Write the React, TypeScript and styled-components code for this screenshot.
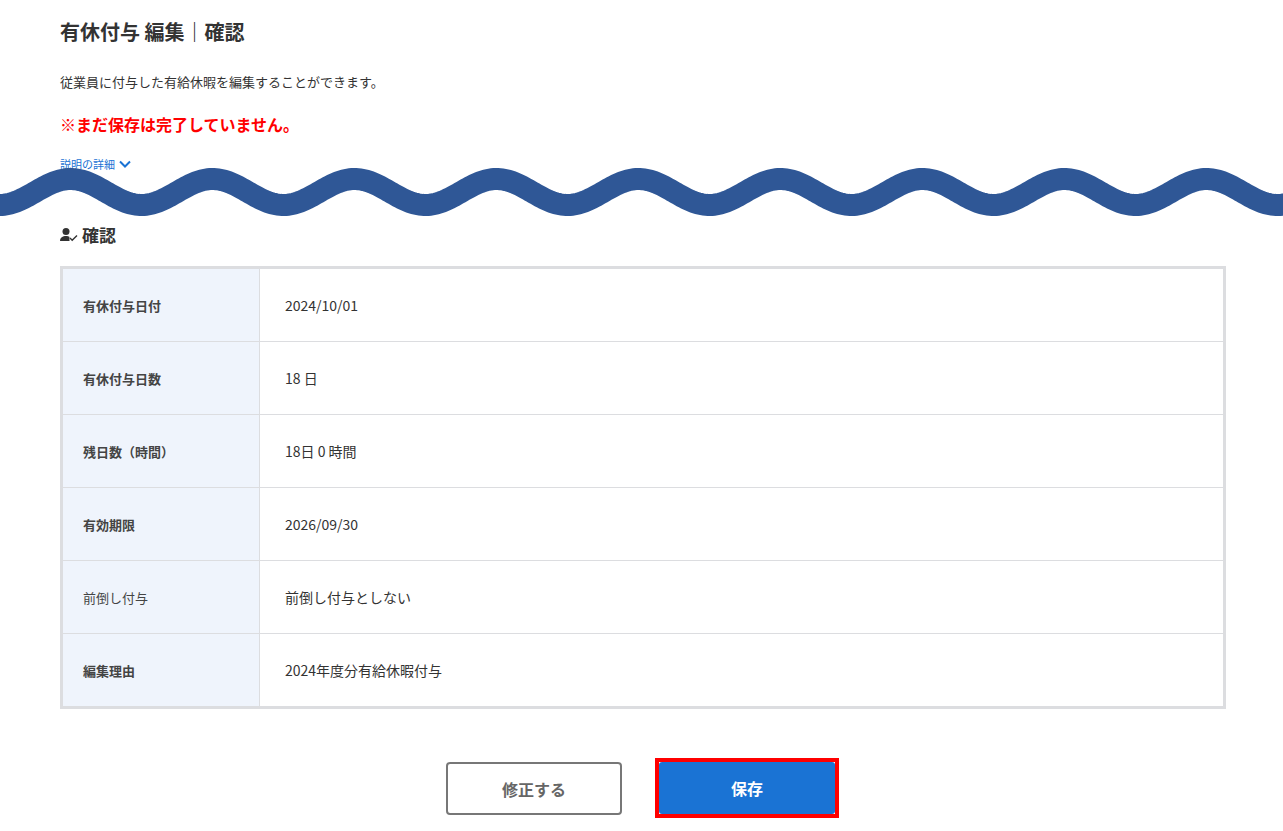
import React from "react";
import styled, { createGlobalStyle } from "styled-components";

const Global = createGlobalStyle`
  body { margin: 0; font-family: "Noto Sans CJK JP", "Noto Sans", sans-serif; color: #333; background: #fff; }
`;
const Page = styled.div`position: relative; padding: 14px 58px 0 60px; width: 1283px; box-sizing: border-box;`;
const Title = styled.h1`margin: 0; font-size: 20px; font-weight: 700; line-height: 36px;`;
const Desc = styled.p`margin: 22px 0 0; font-size: 13px; line-height: 20px;`;
const Warn = styled.p`margin: 20px 0 0; font-size: 16px; font-weight: 700; color: #ff0000; line-height: 24px;`;
const Link = styled.div`margin-top: 20px; font-size: 11px; color: #1a73d4; display: flex; align-items: center; gap: 4px; height: 16px;`;
const Section = styled.h2`margin: 50px 0 0; font-size: 17px; font-weight: 700; display: flex; align-items: center; gap: 4px; line-height: 26px;`;
const Table = styled.div`margin-top: 18px; border: 3px solid #dcdde0; width: 1166px; box-sizing: border-box;`;
const Row = styled.div`display: grid; grid-template-columns: 197px 1fr; height: 72px; & + & { border-top: 1px solid #dcdde0; }`;
const Label = styled.div`background: #eff4fc; border-right: 1px solid #dcdde0; display: flex; align-items: center; padding-left: 20px; font-size: 13px; font-weight: 700; color: #444;`;
const Value = styled.div`display: flex; align-items: center; padding-left: 25px; font-size: 14px;`;
const Buttons = styled.div`display: flex; justify-content: center; gap: 33px; margin-top: 49px; padding-right: 0;`;
const Outline = styled.button`width: 176px; height: 53px; border: 2px solid #777; border-radius: 4px; background: #fff; color: #666; font: 700 16px "Noto Sans CJK JP", sans-serif; margin-top: 4px;`;
const Frame = styled.div`border: 4px solid #ff0000; padding: 0;`;
const Primary = styled.button`width: 176px; height: 52px; border: none; border-radius: 3px; background: #1a73d4; color: #fff; font: 700 16px "Noto Sans CJK JP", sans-serif; display: block;`;
const Wave = styled.svg`position: absolute; left: 0; top: 150px; pointer-events: none;`;

const rows: [string, string, boolean][] = [
  ["有休付与日付", "2024/10/01", true],
  ["有休付与日数", "18 日", true],
  ["残日数（時間）", "18日 0 時間", true],
  ["有効期限", "2026/09/30", true],
  ["前倒し付与", "前倒し付与としない", false],
  ["編集理由", "2024年度分有給休暇付与", true],
];

function wavePath() {
  const P = 142, A = 13, c = 42;
  let d = `M -30 ${c + A * Math.sin((-30 / P) * 2 * Math.PI - 1.2)}`;
  for (let x = -28; x <= 1300; x += 2) {
    d += ` L ${x} ${(c - A * Math.sin(((x - 35) / P) * 2 * Math.PI)).toFixed(2)}`;
  }
  return d;
}

export default function App() {
  return (
    <Page>
      <Global />
      <Title>有休付与 編集｜確認</Title>
      <Desc>従業員に付与した有給休暇を編集することができます。</Desc>
      <Warn>※まだ保存は完了していません。</Warn>
      <Link>説明の詳細
        <svg width="12" height="8" viewBox="0 0 12 8"><path d="M1 1.5 6 6.5 11 1.5" fill="none" stroke="#1a73d4" strokeWidth="2" /></svg>
      </Link>
      <Section>
        <svg width="18" height="16" viewBox="0 0 18 16"><circle cx="6" cy="4.5" r="3.5" fill="#333" /><path d="M0 14c0-3.5 2.7-5 6-5 1.5 0 2.5.3 3.4.8L9.5 14Z" fill="#333" /><path d="M10 11l2.2 2.2L17 8.5" fill="none" stroke="#333" strokeWidth="1.4" /></svg>
        確認
      </Section>
      <Table>
        {rows.map(([l, v, b]) => (
          <Row key={l}><Label style={b ? undefined : { fontWeight: 400 }}>{l}</Label><Value>{v}</Value></Row>
        ))}
      </Table>
      <Buttons>
        <Outline>修正する</Outline>
        <Frame><Primary>保存</Primary></Frame>
      </Buttons>
      <Wave width="1283" height="90" viewBox="0 0 1283 90">
        <path d={wavePath()} fill="none" stroke="#2f5796" strokeWidth="22" />
      </Wave>
    </Page>
  );
}
